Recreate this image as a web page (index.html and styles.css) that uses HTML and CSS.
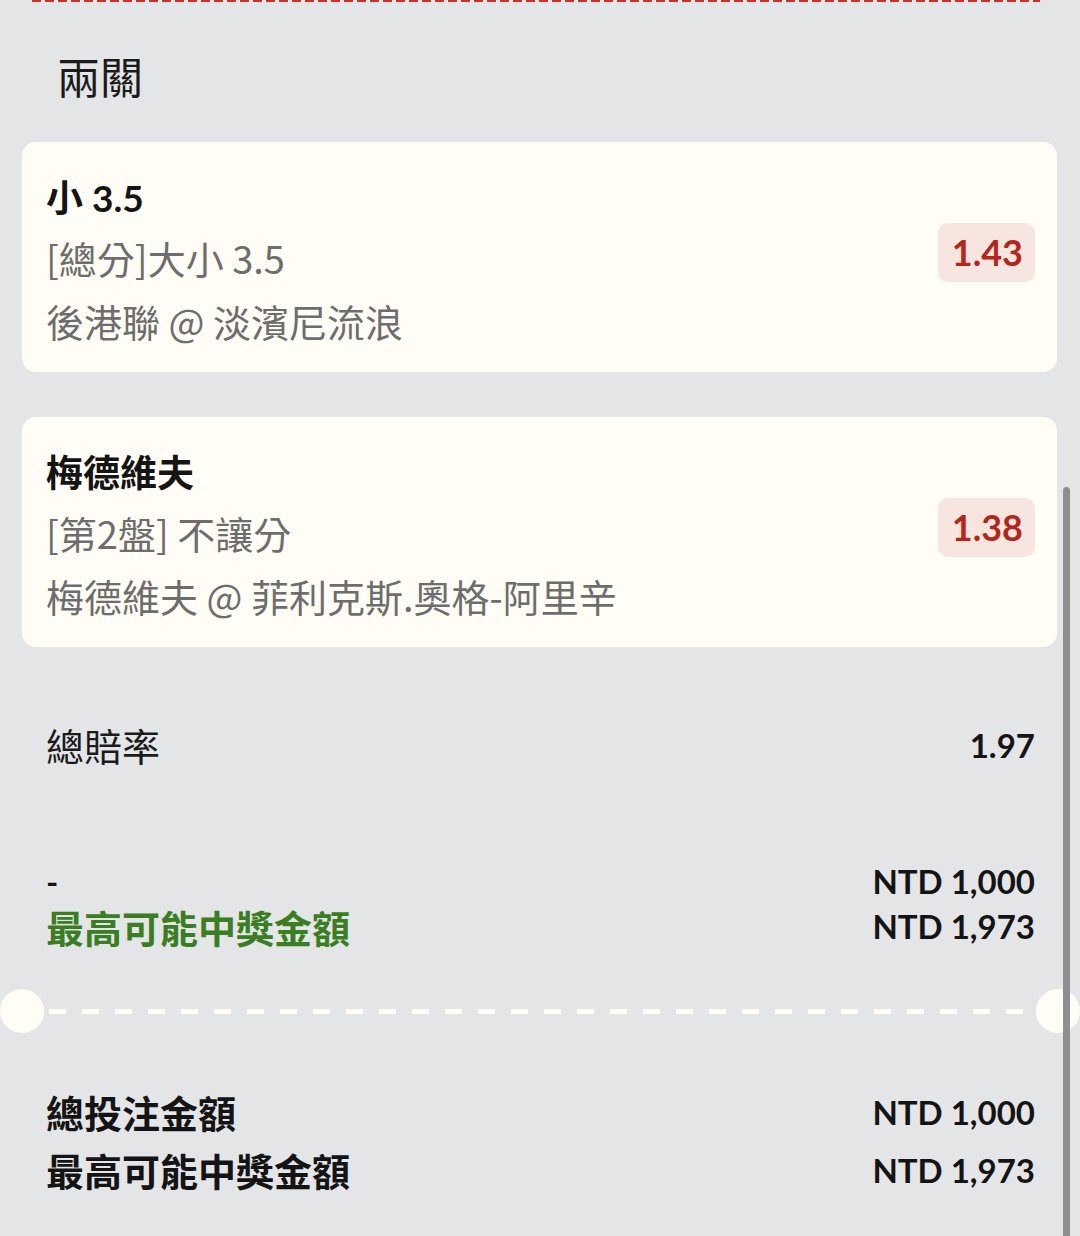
FILE: index.html
```html
<!DOCTYPE html>
<html lang="zh-Hant">
<head>
<meta charset="utf-8">
<title>兩關</title>
<link rel="stylesheet" href="styles.css">
</head>
<body>
<div class="page">
  <div class="top-dash"></div>
  <h1 class="section-title">兩關</h1>

  <div class="card">
    <div class="card-info">
      <div class="pick">小 3.5</div>
      <div class="sub">[總分]大小 3.5</div>
      <div class="sub">後港聯 @ 淡濱尼流浪</div>
    </div>
    <div class="odds">1.43</div>
  </div>

  <div class="card">
    <div class="card-info">
      <div class="pick">梅德維夫</div>
      <div class="sub">[第2盤] 不讓分</div>
      <div class="sub">梅德維夫 @ 菲利克斯.奧格-阿里辛</div>
    </div>
    <div class="odds">1.38</div>
  </div>

  <div class="row total-odds">
    <span class="label">總賠率</span>
    <span class="num">1.97</span>
  </div>

  <div class="row stake">
    <div class="stack">
      <span class="dash-label">-</span>
      <span class="win-label">最高可能中獎金額</span>
    </div>
    <div class="stack right">
      <span class="num">NTD 1,000</span>
      <span class="num">NTD 1,973</span>
    </div>
  </div>

  <div class="divider">
    <span class="notch"></span>
    <span class="dashes"></span>
    <span class="notch"></span>
  </div>

  <div class="row totals">
    <div class="stack">
      <span class="total-label">總投注金額</span>
      <span class="total-label">最高可能中獎金額</span>
    </div>
    <div class="stack right">
      <span class="num">NTD 1,000</span>
      <span class="num">NTD 1,973</span>
    </div>
  </div>

  <div class="scroll-thumb"></div>
</div>
</body>
</html>
```
FILE: styles.css
```css
* { box-sizing: border-box; }

html, body {
  margin: 0;
  padding: 0;
  background: #e4e5e7;
}

body {
  font-family: Lato, "Noto Sans CJK TC", sans-serif;
  color: #1b1b1b;
  width: 1080px;
  height: 1236px;
  overflow: hidden;
}

.page {
  position: relative;
  height: 1236px;
}

.top-dash {
  height: 2px;
  margin: 0 40px 0 32px;
  background: repeating-linear-gradient(to right, #c8322a 0 9px, transparent 9px 13px);
}

.section-title {
  margin: 48px 0 0 57px;
  font-family: "Noto Sans CJK TC", sans-serif;
  font-weight: 400;
  font-size: 43px;
  line-height: 50px;
  color: #1b1b1b;
}

.card {
  display: flex;
  align-items: center;
  justify-content: space-between;
  margin: 42px 23px 0 22px;
  height: 230px;
  padding: 27px 22px 18px 24px;
  background: #fffdf5;
  border-radius: 14px;
}

.card + .card { margin-top: 45px; }

.card-info {
  display: flex;
  flex-direction: column;
  align-self: flex-start;
}

.pick {
  font-family: Lato, "Noto Sans CJK TC", sans-serif;
  font-weight: 700;
  font-size: 37px;
  line-height: 57px;
  color: #141414;
}

.sub {
  font-family: "Noto Sans CJK TC", sans-serif;
  font-weight: 400;
  font-size: 38px;
  line-height: 63px;
  color: #6d6d6d;
}

.odds {
  margin-top: -18px;
  padding: 0 12px 0 14px;
  height: 59px;
  line-height: 59px;
  border-radius: 10px;
  background: #f6e6df;
  color: #b3261e;
  font-family: Lato, sans-serif;
  font-weight: 700;
  font-size: 36px;
}

.row {
  display: flex;
  justify-content: space-between;
  align-items: center;
  padding: 0 45px 0 46px;
}

.total-odds {
  margin-top: 76px;
  height: 44px;
}

.label {
  font-family: "Noto Sans CJK TC", sans-serif;
  font-size: 38px;
  line-height: 44px;
  color: #1b1b1b;
}

.num {
  font-family: Lato, sans-serif;
  font-weight: 700;
  font-size: 33px;
  color: #141414;
}

.stake {
  margin-top: 92px;
}

.stack {
  display: flex;
  flex-direction: column;
}

.stack.right { align-items: flex-end; }

.stake .stack > span { line-height: 45px; height: 45px; }

.dash-label {
  font-family: Lato, sans-serif;
  font-weight: 700;
  font-size: 33px;
  color: #141414;
}

.win-label {
  font-family: "Noto Sans CJK TC", sans-serif;
  font-weight: 700;
  font-size: 38px;
  color: #3b7d23;
}

.divider {
  display: flex;
  align-items: center;
  margin-top: 40px;
  height: 44px;
}

.notch {
  flex: 0 0 44px;
  height: 44px;
  border-radius: 50%;
  background: #fffdf5;
}

.dashes {
  flex: 1;
  height: 5px;
  margin: 0 5px;
  background: repeating-linear-gradient(to right, #fffdf5 0 17px, transparent 17px 33px);
}

.totals {
  margin-top: 50px;
}

.totals .stack > span { line-height: 58px; height: 58px; }

.total-label {
  font-family: "Noto Sans CJK TC", sans-serif;
  font-weight: 700;
  font-size: 38px;
  color: #141414;
}

.scroll-thumb {
  position: absolute;
  top: 487px;
  right: 10px;
  bottom: 0;
  width: 7px;
  border-radius: 4px 4px 0 0;
  background: #8e8e90;
}
```
